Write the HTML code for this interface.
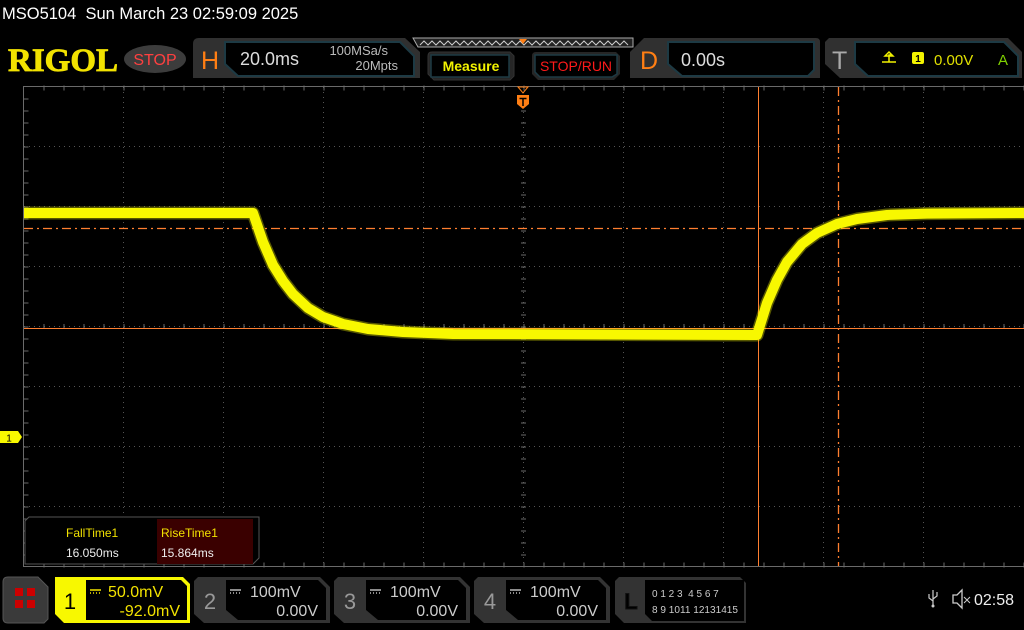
<!DOCTYPE html>
<html><head><meta charset="utf-8"><style>
*{margin:0;padding:0;box-sizing:border-box}
body{width:1024px;height:630px;background:#000;overflow:hidden;position:relative;font-family:"Liberation Sans","DejaVu Sans",sans-serif;color:#fff}
.a{position:absolute}
</style></head><body>
<div class="a" style="left:2px;top:5px;font-size:16.5px;color:#fff;white-space:pre">MSO5104  Sun March 23 02:59:09 2025</div>

<svg class="a" style="left:0;top:0" width="1024" height="630">
 <text x="8" y="71" font-family="Liberation Serif" font-weight="bold" font-size="33" fill="#f2e200" stroke="#f2e200" stroke-width="0.8" textLength="110" lengthAdjust="spacingAndGlyphs">RIGOL</text>
 <ellipse cx="155" cy="59" rx="31" ry="14" fill="#3c3c3c"/>
 <text x="155" y="65" text-anchor="middle" font-size="16" fill="#ff4040">STOP</text>
 <path d="M193 44 Q193 38 199 38 H405 L420 52 V78 H193 Z" fill="#303030"/>
 <text x="201" y="69" font-size="25" fill="#ff7f14">H</text>
 <path d="M225 42 H400 L414 56 V76 H238 L225 64 Z" fill="#000" stroke="#1d3a44" stroke-width="2"/>
 <text x="240" y="65" font-size="18" fill="#ddd">20.0ms</text>
 <text x="388" y="55" text-anchor="end" font-size="13" fill="#bbb">100MSa/s</text>
 <text x="398" y="70" text-anchor="end" font-size="13" fill="#bbb">20Mpts</text>
 <path d="M413 38 H633 V47 H418 Z" fill="#222" stroke="#aaa" stroke-width="1"/>
 <polyline points="420,45 424,41 428,45 432,41 436,45 440,41 444,45 448,41 452,45 456,41 460,45 464,41 468,45 472,41 476,45 480,41 484,45 488,41 492,45 496,41 500,45 504,41 508,45 512,41 516,45 520,41 524,45 528,41 532,45 536,41 540,45 544,41 548,45 552,41 556,45 560,41 564,45 568,41 572,45 576,41 580,45 584,41 588,45 592,41 596,45 600,41 604,45 608,41 612,45 616,41 620,45 624,41 628,45" fill="none" stroke="#ccc" stroke-width="1"/>
 <path d="M519 39 L527 39 L523 44 Z" fill="#ff7f14"/>
 <path d="M428 56 Q428 52 432 52 H510 L514 56 V76 L510 80 H434 L428 74 Z" fill="#262626" stroke="#333" stroke-width="1"/>
 <path d="M431 55 H509 V77 H431 Z" fill="#000" stroke="#1d3a44" stroke-width="1.5"/>
 <text x="471" y="71" text-anchor="middle" font-size="14" font-weight="bold" fill="#f2f200">Measure</text>
 <path d="M532 56 Q532 52 536 52 H616 L620 56 V74 L614 80 H538 L532 74 Z" fill="#262626"/>
 <path d="M535 55 H617 V74 L612 77 H540 L535 72 Z" fill="#000" stroke="#1d3a44" stroke-width="1.5"/>
 <text x="576" y="71" text-anchor="middle" font-size="14" fill="#ff1a1a">STOP/RUN</text>
 <path d="M644 38 H816 Q820 38 820 42 V78 H630 V52 Z" fill="#303030"/>
 <text x="640" y="69" font-size="25" fill="#ff7f14">D</text>
 <path d="M668 42 H814 V70 L808 76 H682 L668 64 Z" fill="#000" stroke="#1d3a44" stroke-width="2"/>
 <text x="681" y="66" font-size="18" fill="#ddd">0.00s</text>
 <path d="M829 38 H1008 L1022 52 V78 H840 L825 64 V42 Z" fill="#303030"/>
 <text x="832" y="69" font-size="25" fill="#aaa">T</text>
 <path d="M855 42 H1004 L1018 56 V76 H868 L855 64 Z" fill="#000" stroke="#1d3a44" stroke-width="2"/>
 <path d="M882 62 H889 V55 H891 M885 56 L889 52 L893 56 Z M889 62 H896" fill="none" stroke="#f2f200" stroke-width="1.5"/>
 <rect x="912" y="52" width="12" height="12" rx="2" fill="#f2f200"/>
 <text x="918" y="62" text-anchor="middle" font-size="10" font-weight="bold" fill="#000">1</text>
 <text x="934" y="65" font-size="15" fill="#e0e000">0.00V</text>
 <text x="998" y="65" font-size="15" fill="#7fd000">A</text>

 <g stroke="#555" stroke-width="1" stroke-dasharray="1 4" fill="none">
  <path d="M123.5 87V566M223.5 87V566M323.5 87V566M423.5 87V566M623.5 87V566M723.5 87V566M823.5 87V566M923.5 87V566"/>
  <path d="M24 146.5H1024M24 206.5H1024M24 266.5H1024M24 386.5H1024M24 446.5H1024M24 506.5H1024"/>
  <path d="M523.5 87V566M24 326.5H1024"/>
 </g>
 <g stroke="#6a6a6a" fill="none">
  <path d="M23.5 86V566M23 86.5H1024M23 566.5H1024" stroke-width="1"/>
  <path d="M43.5 88H1024" stroke-width="5" stroke-dasharray="1 19"/>
  <path d="M43.5 565H1024" stroke-width="5" stroke-dasharray="1 19"/>
  <path d="M26 98.5V566" stroke-width="5" stroke-dasharray="1 11"/>
  <path d="M43.5 326.5H1024" stroke-width="5" stroke-dasharray="1 19"/>
  <path d="M523.5 98.5V566" stroke-width="5" stroke-dasharray="1 11"/>
 </g>

 <path d="M24 328.5H1024M758.5 87V566" stroke="#ff7f30" stroke-width="1"/>
 <path d="M24 228.5H1024M838.5 87V566" stroke="#ff7f30" stroke-width="1.3" stroke-dasharray="9 4 2 4"/>

 <polyline points="24,213 253,213 263,242 273,265 283,281 293,294 308,308 323,317 343,324 368,329 403,332 453,334 755,335 757,335 767,303 777,280 787,262 802,244 817,233 837,224 857,219 887,215 927,213.6 1024,213" fill="none" stroke="#f8f800" stroke-opacity="0.35" stroke-width="13" stroke-linejoin="round"/>
 <polyline points="24,213 253,213 263,242 273,265 283,281 293,294 308,308 323,317 343,324 368,329 403,332 453,334 755,335 757,335 767,303 777,280 787,262 802,244 817,233 837,224 857,219 887,215 927,213.6 1024,213" fill="none" stroke="#f8f800" stroke-width="10" stroke-linejoin="round"/>

 <path d="M518 87 H528 L523 93 Z" fill="none" stroke="#ff7f14" stroke-width="1"/>
 <path d="M517 95 H529 V104 L523 109 L517 104 Z" fill="#ff7f14"/>
 <path d="M519.5 98.5 H526.5 M523 98.5 V106" stroke="#000" stroke-width="1.5"/>
 <path d="M0 431 H18 L22 437 L18 443 H0 Z" fill="#f8f800"/>
 <text x="9" y="441.5" text-anchor="middle" font-size="10" fill="#000">1</text>

 <path d="M29 517 H259 V558 L253 564 H25 V521 Z" fill="#000" stroke="#555" stroke-width="1"/>
 <rect x="157" y="519" width="96" height="45" fill="#3a0000"/>
 <text x="66" y="537" font-size="12" fill="#f2e200">FallTime1</text>
 <text x="66" y="557" font-size="12" fill="#eee">16.050ms</text>
 <text x="161" y="537" font-size="12" fill="#f2e200">RiseTime1</text>
 <text x="161" y="557" font-size="12" fill="#eee">15.864ms</text>

 <path d="M8 577 H38 L48 587 V619 L44 623 H8 Q3 623 3 618 V582 Q3 577 8 577 Z" fill="#3a3a3a" stroke="#555"/>
 <rect x="15" y="588" width="8" height="8" fill="#c00"/><rect x="27" y="588" width="8" height="8" fill="#c00"/>
 <rect x="15" y="600" width="8" height="8" fill="#c00"/><rect x="27" y="600" width="8" height="8" fill="#c00"/>

 <path d="M55 577 H183 L190 584 V623 H64 L55 614 Z" fill="#f8f800"/>
 <path d="M86 580 H181 L187 586 V620 H86 Z" fill="#000"/>
 <text x="70" y="609" text-anchor="middle" font-size="22" fill="#000">1</text>
 <path d="M90 590 H101 M90 593 H91 M93 593 H94 M96 593 H97 M99 593 H100" stroke="#f2e200" stroke-width="1.5"/>
 <text x="108" y="597" font-size="16" fill="#f2e200">50.0mV</text>
 <text x="180" y="616" text-anchor="end" font-size="16" fill="#f2e200">-92.0mV</text>

 <g font-size="16" fill="#ccc">
  <path d="M198 577 H320 L330 587 V623 H204 L194 614 V581 Z" fill="#333"/>
  <path d="M226 580 H318 L326 588 V620 H238 L226 610 Z" fill="#000"/>
  <text x="210" y="609" text-anchor="middle" font-size="22" fill="#999">2</text>
  <path d="M230 590 H241 M230 593 H231 M233 593 H234 M236 593 H237 M239 593 H240" stroke="#bbb" stroke-width="1.5"/>
  <text x="250" y="597">100mV</text><text x="318" y="616" text-anchor="end">0.00V</text>
  <path d="M338 577 H460 L470 587 V623 H344 L334 614 V581 Z" fill="#333"/>
  <path d="M366 580 H458 L466 588 V620 H378 L366 610 Z" fill="#000"/>
  <text x="350" y="609" text-anchor="middle" font-size="22" fill="#999">3</text>
  <path d="M370 590 H381 M370 593 H371 M373 593 H374 M376 593 H377 M379 593 H380" stroke="#bbb" stroke-width="1.5"/>
  <text x="390" y="597">100mV</text><text x="458" y="616" text-anchor="end">0.00V</text>
  <path d="M478 577 H600 L610 587 V623 H484 L474 614 V581 Z" fill="#333"/>
  <path d="M506 580 H598 L606 588 V620 H518 L506 610 Z" fill="#000"/>
  <text x="490" y="609" text-anchor="middle" font-size="22" fill="#999">4</text>
  <path d="M510 590 H521 M510 593 H511 M513 593 H514 M516 593 H517 M519 593 H520" stroke="#bbb" stroke-width="1.5"/>
  <text x="530" y="597">100mV</text><text x="598" y="616" text-anchor="end">0.00V</text>
 </g>
 <path d="M619 577 H740 L746 583 V623 H624 L615 614 V581 Z" fill="#333"/>
 <path d="M645 580 H744 V621 H652 L645 614 Z" fill="#000"/>
 <text x="631" y="609" text-anchor="middle" font-size="22" font-weight="bold" fill="#000" stroke="#111">L</text>
 <text x="652" y="597" font-size="10" fill="#ccc" style="white-space:pre">0 1 2 3  4 5 6 7</text>
 <text x="652" y="613" font-size="10" fill="#ccc" textLength="86" lengthAdjust="spacingAndGlyphs">8 9 1011 12131415</text>

 <path d="M933 590 V606 M929 594 V598 L933 601 M937 592 V596 L933 599" stroke="#ccc" stroke-width="1.2" fill="none"/>
 <circle cx="933" cy="606" r="1.5" fill="#ccc"/>
 <path d="M953 595 H957 L962 590 V608 L957 603 H953 Z" fill="none" stroke="#ccc" stroke-width="1.3"/>
 <path d="M964 597 L970 603 M970 597 L964 603" stroke="#ccc" stroke-width="1"/>
 <text x="974" y="605" font-size="16" fill="#eee">02:58</text>
</svg>
</body></html>
